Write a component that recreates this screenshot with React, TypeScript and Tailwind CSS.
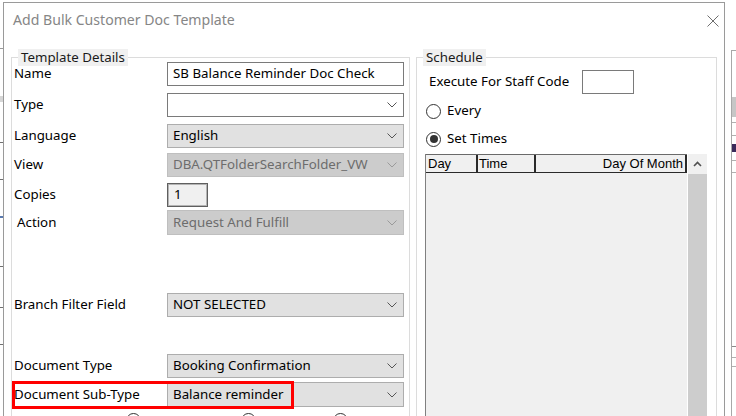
import React from 'react';

type ComboKind = 'white' | 'gray' | 'disabled';

function Chevron({ color = '#606060' }: { color?: string }) {
  return (
    <svg width="10" height="6" viewBox="0 0 10 6" className="shrink-0">
      <polyline points="0.5,0.5 5,5 9.5,0.5" fill="none" stroke={color} strokeWidth="1" />
    </svg>
  );
}

function Combo({ value, kind }: { value?: string; kind: ComboKind }) {
  const box =
    kind === 'white'
      ? 'bg-white border-[#7a7a7a] text-black'
      : kind === 'gray'
        ? 'bg-[#e1e1e1] border-[#adadad] text-black'
        : 'bg-[#cccccc] border-[#bfbfbf] text-[#6d6d6d]';
  return (
    <div className={`flex h-full w-[237px] items-center justify-between border pl-[5px] pr-[6px] ${box}`}>
      <span className="truncate">{value}</span>
      <Chevron color={kind === 'disabled' ? '#9a9a9a' : '#555555'} />
    </div>
  );
}

function Row({
  label,
  children,
  className = '',
  labelClass = '',
}: {
  label: string;
  children: React.ReactNode;
  className?: string;
  labelClass?: string;
}) {
  return (
    <div className={`flex shrink-0 items-center pl-[2px] ${className}`}>
      <span className={`w-[153px] shrink-0 ${labelClass}`}>{label}</span>
      {children}
    </div>
  );
}

function GroupBox({
  title,
  className = '',
  children,
}: {
  title: string;
  className?: string;
  children: React.ReactNode;
}) {
  return (
    <div className={`relative shrink-0 border border-[#dcdcdc] ${className}`}>
      <span className="absolute left-[6px] top-[-9px] bg-[#f0f0f0] px-[3px] leading-[17px] text-[#1a1a1a]">
        {title}
      </span>
      {children}
    </div>
  );
}

function Radio({ checked }: { checked?: boolean }) {
  return (
    <span className="flex h-[15px] w-[15px] shrink-0 items-center justify-center rounded-full border border-[#333333] bg-white">
      {checked && <span className="h-[8px] w-[8px] rounded-full bg-[#333333]" />}
    </span>
  );
}

export default function App() {
  return (
    <div className="flex h-[416px] w-[736px] items-start overflow-hidden bg-white font-['Noto_Sans',sans-serif] text-[13.3px] text-black">
      {/* app behind, left edge */}
      <div className="flex w-[3px] shrink-0 flex-col">
        <div className="mt-[48px] h-px bg-[#9a9a9a]" />
        <div className="mt-[47px] h-[6px] bg-[#d6d6d6]" />
        <div className="mt-[40px] h-px bg-[#707070]" />
        <div className="mt-[36px] h-px bg-[#707070]" />
        <div className="mt-[36px] h-[2px] bg-[#5a7ab0]" />
        <div className="mt-[48px] h-px bg-[#707070]" />
        <div className="mt-[40px] h-px bg-[#707070]" />
        <div className="mt-[36px] h-px bg-[#707070]" />
      </div>

      {/* dialog */}
      <div className="mt-[2px] flex w-[722px] shrink-0 flex-col border border-[#9a9a9a] bg-white">
        <div className="flex h-[34px] shrink-0 items-center justify-between pl-[9px] pr-[5px]">
          <span className="text-[14.1px] text-[#868686]">Add Bulk Customer Doc Template</span>
          <svg width="12" height="12" viewBox="0 0 12 12" className="mt-[2px]">
            <line x1="0.5" y1="0.5" x2="11.5" y2="11.5" stroke="#6e6e6e" strokeWidth="1" />
            <line x1="11.5" y1="0.5" x2="0.5" y2="11.5" stroke="#6e6e6e" strokeWidth="1" />
          </svg>
        </div>

        <div className="mt-[20px] flex items-start pl-[7px]">
          <GroupBox title="Template Details" className="w-[399px]">
            <Row label="Name" className="mt-[4px] h-[24px]">
              <div className="flex h-full w-[237px] items-center border border-[#7a7a7a] bg-white pl-[5px]">
                SB Balance Reminder Doc Check
              </div>
            </Row>
            <Row label="Type" className="mt-[7px] h-[24px]">
              <Combo kind="white" />
            </Row>
            <Row label="Language" className="mt-[7px] h-[24px]">
              <Combo kind="gray" value="English" />
            </Row>
            <Row label="View" className="mt-[5px] h-[24px]">
              <Combo kind="disabled" value="DBA.QTFolderSearchFolder_VW" />
            </Row>
            <Row label="Copies" className="mt-[6px] h-[24px]">
              <div className="flex h-full w-[41px] items-center border border-[#5f5f5f] bg-[#f0f0f0] pl-[6px] shadow-[inset_0_0_0_1px_#b4b4b4]">
                1
              </div>
            </Row>
            <Row label="Action" labelClass="pl-[3px]" className="mt-[3px] h-[25px]">
              <Combo kind="disabled" value="Request And Fulfill" />
            </Row>
            <Row label="Branch Filter Field" className="mt-[58px] h-[24px]">
              <Combo kind="gray" value="NOT SELECTED" />
            </Row>
            <Row label="Document Type" className="mt-[37px] h-[24px]">
              <Combo kind="gray" value="Booking Confirmation" />
            </Row>
            <div className="relative mt-[4px]">
              <Row label="Document Sub-Type" className="h-[25px]">
                <Combo kind="gray" value="Balance reminder" />
              </Row>
              <div className="absolute left-0 top-[-1px] h-[28px] w-[282px] border-[3px] border-[#ff0000]" />
            </div>
            <div className="mt-[6px] flex">
              <span className="ml-[114px] h-[15px] w-[15px] rounded-full border border-[#333333]" />
              <span className="ml-[100px] h-[15px] w-[15px] rounded-full border border-[#333333]" />
              <span className="ml-[77px] h-[15px] w-[15px] rounded-full border border-[#333333]" />
            </div>
          </GroupBox>

          <GroupBox title="Schedule" className="ml-[6px] w-[301px]">
            <div className="mt-[12px] flex h-[24px] items-center pl-[12px]">
              <span className="w-[153px]">Execute For Staff Code</span>
              <div className="h-full w-[52px] border border-[#7a7a7a] bg-white" />
            </div>
            <div className="mt-[9px] flex h-[16px] items-center gap-[6px] pl-[9px]">
              <Radio />
              <span>Every</span>
            </div>
            <div className="mt-[12px] flex h-[16px] items-center gap-[6px] pl-[9px]">
              <Radio checked />
              <span>Set Times</span>
            </div>
            <div className="ml-[8px] mt-[7px] flex h-[280px] w-[282px] font-['Liberation_Sans',Arial,sans-serif] text-[13px]">
              <div className="flex w-[262px] flex-col border-l border-[#808080] bg-[#f0f0f0]">
                <div className="flex h-[19px] border-b border-t border-b-[#2a2a2a] border-t-[#6a6a6a] leading-[17px]">
                  <span className="w-[52px] border-r-2 border-[#2a2a2a] pl-[2px]">Day</span>
                  <span className="w-[58px] border-r-2 border-[#2a2a2a] pl-[1px]">Time</span>
                  <span className="flex-1 border-r-2 border-[#2a2a2a] pr-[2px] text-right">Day Of Month</span>
                </div>
              </div>
              <div className="flex w-[20px] flex-col border-l border-white">
                <div className="flex h-[20px] items-center justify-center bg-[#f0f0f0]">
                  <svg width="9" height="6" viewBox="0 0 9 6">
                    <polyline points="1,5 4.5,1.5 8,5" fill="none" stroke="#505050" strokeWidth="1.6" />
                  </svg>
                </div>
                <div className="flex-1 bg-[#cdcdcd]" />
              </div>
            </div>
          </GroupBox>
        </div>
      </div>

      {/* app behind, right edge */}
      <div className="flex h-[416px] w-[11px] shrink-0 flex-col pl-[6px]">
        <div className="mt-[50px] flex flex-1 flex-col border-l border-t border-[#a8a8a8]">
          <div className="mt-[46px] h-[20px] bg-[#c6c6c6]" />
          <div className="mt-[5px] h-px bg-[#b0b0b0]" />
          <div className="mt-[12px] h-px bg-[#b0b0b0]" />
          <div className="mt-[8px] h-[8px] w-[4px] bg-[#3a2a5a]" />
          <div className="mt-[8px] h-px bg-[#b0b0b0]" />
          <div className="mt-[11px] h-px bg-[#b0b0b0]" />
          <div className="mt-[173px] h-px bg-[#8a8a8a]" />
          <div className="mt-[10px] h-px bg-[#b0b0b0]" />
          <div className="mt-[8px] h-px bg-[#b0b0b0]" />
        </div>
      </div>
    </div>
  );
}
